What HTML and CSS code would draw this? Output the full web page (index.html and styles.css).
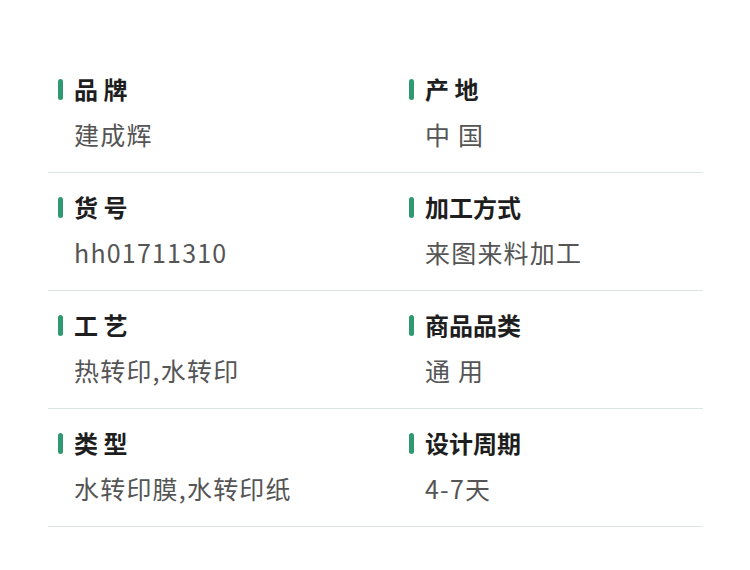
FILE: index.html
```
<!DOCTYPE html>
<html lang="zh">
<head>
<meta charset="utf-8">
<link rel="stylesheet" href="styles.css">
</head>
<body>
<div class="spec">
  <div class="row">
    <div class="cell"><div class="label">品 牌</div><div class="value">建成辉</div></div>
    <div class="cell"><div class="label">产 地</div><div class="value">中 国</div></div>
  </div>
  <div class="row">
    <div class="cell"><div class="label">货 号</div><div class="value">hh01711310</div></div>
    <div class="cell"><div class="label">加工方式</div><div class="value">来图来料加工</div></div>
  </div>
  <div class="row">
    <div class="cell"><div class="label">工 艺</div><div class="value">热转印,水转印</div></div>
    <div class="cell"><div class="label">商品品类</div><div class="value">通 用</div></div>
  </div>
  <div class="row">
    <div class="cell"><div class="label">类 型</div><div class="value">水转印膜,水转印纸</div></div>
    <div class="cell"><div class="label">设计周期</div><div class="value">4-7天</div></div>
  </div>
</div>
</body>
</html>
```
FILE: styles.css
```
html, body {
  margin: 0;
  padding: 0;
  background: #ffffff;
}
body {
  font-family: "Noto Sans CJK SC", "Noto Sans", sans-serif;
}
.spec {
  width: 655px;
  margin-left: 48px;
  padding-top: 55px;
}
.row {
  display: grid;
  grid-template-columns: 351px 1fr;
  padding: 19px 0 23px;
  border-bottom: 1px solid #dbe6e4;
}
.cell {
  padding-left: 10px;
  display: flex;
  flex-direction: column;
  gap: 15px;
}
.label {
  position: relative;
  padding-left: 16px;
  font-size: 24px;
  line-height: 30px;
  font-weight: 700;
  color: #1e1e1e;
}
.label::before {
  content: "";
  position: absolute;
  left: 0;
  top: 5px;
  width: 5px;
  height: 21px;
  border-radius: 3px;
  background: #2f9a6f;
}
.value {
  padding-left: 16px;
  font-size: 25px;
  line-height: 30px;
  color: #555555;
  letter-spacing: 1.2px;
}
```
